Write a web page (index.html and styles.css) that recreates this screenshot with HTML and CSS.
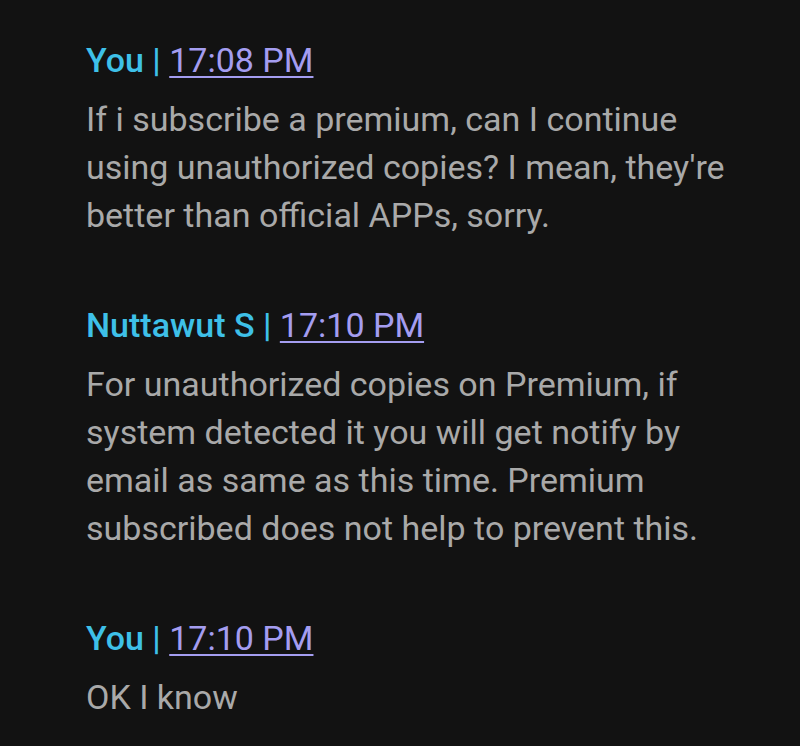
FILE: index.html
```html
<!DOCTYPE html>
<html lang="en">

<head>
    <meta charset="UTF-8">
    <meta name="viewport" content="width=device-width, initial-scale=1.0">
    <title>Chat</title>
    <link rel="stylesheet" href="styles.css">
</head>

<body>
    <div class="chat">
        <div class="msg">
            <div class="meta"><span class="name">You |</span> <a class="time" href="#">17:08 PM</a></div>
            <p class="text">If i subscribe a premium, can I continue using unauthorized copies? I mean, they're better than official APPs, sorry.</p>
        </div>
        <div class="msg">
            <div class="meta"><span class="name">Nuttawut S |</span> <a class="time" href="#">17:10 PM</a></div>
            <p class="text">For unauthorized copies on Premium, if system detected it you will get notify by email as same as this time. Premium subscribed does not help to prevent this.</p>
        </div>
        <div class="msg">
            <div class="meta"><span class="name">You |</span> <a class="time" href="#">17:10 PM</a></div>
            <p class="text">OK I know</p>
        </div>
    </div>
</body>

</html>
```

FILE: styles.css
```css
html,
body {
    margin: 0;
    background: #121212;
}

body {
    font-family: Roboto, "Liberation Sans", sans-serif;
    height: 746px;
    overflow: hidden;
}

.chat {
    padding: 36px 0 0 86px;
    width: 660px;
}

.msg {
    margin-bottom: 62px;
}

.meta {
    font-size: 34px;
    line-height: 48px;
    margin-bottom: 11px;
}

.name {
    color: #3ec0e8;
    font-weight: 500;
}

.time {
    color: #a49df0;
    text-decoration: underline;
    text-decoration-thickness: 2px;
    text-underline-offset: 4px;
}

.text {
    margin: 0;
    color: #a9a9a9;
    font-size: 34px;
    line-height: 48px;
}
```
